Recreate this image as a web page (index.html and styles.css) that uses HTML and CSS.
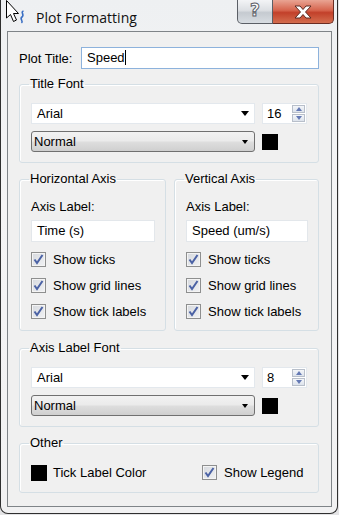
FILE: index.html
```html
<!DOCTYPE html>
<html>
<head>
	<title>Plot Formatting</title>
	<link rel="stylesheet" href="styles.css">
</head>
<body>
<div class="window">
	<div class="titlebar">
		<svg class="appicon" width="24" height="26" viewBox="0 0 24 26">
			<path d="M19.5 11 C16 12 21 15 18 17 C15 19 20 21 17.5 23" fill="none" stroke="#3a6fc4" stroke-width="1.6"/>
			<path d="M2.5 0.5 L2.5 18 L6.5 14.5 L9.5 21.5 L12.5 20 L9.5 13.5 L14.5 13.5 Z" fill="#fff" stroke="#000" stroke-width="1" stroke-linejoin="round"/>
		</svg>
		<span class="wtitle">Plot Formatting</span>
		<div class="caption">
			<div class="btn help">?</div>
			<div class="btn close">
				<svg width="22" height="14" viewBox="0 0 22 14">
					<path d="M3 1 L8 1 L11 4.5 L14 1 L19 1 L13.5 7 L19 13 L14 13 L11 9.5 L8 13 L3 13 L8.5 7 Z" fill="#fff" stroke="#5a2a22" stroke-width="1" stroke-linejoin="round"/>
				</svg>
			</div>
		</div>
	</div>

	<div class="client">
		<div class="title-row">
			<span class="lbl">Plot Title:</span>
			<div class="textbox focus">Speed<span class="caret"></span></div>
		</div>

		<fieldset class="group">
			<legend>Title Font</legend>
			<div class="font-row">
				<div class="combo flat">Arial<i class="arrow"></i></div>
				<div class="spin">16<span class="spin-btns"><b class="up"></b><b class="down"></b></span></div>
			</div>
			<div class="font-row">
				<div class="combo raised">Normal<i class="arrow small"></i></div>
				<span class="swatch"></span>
			</div>
		</fieldset>

		<div class="axes">
			<fieldset class="group axis">
				<legend>Horizontal Axis</legend>
				<div class="lbl">Axis Label:</div>
				<div class="textbox">Time (s)</div>
				<div class="checks">
					<div class="check"><span class="box"><svg width="11" height="11" viewBox="0 0 11 11"><path d="M1.5 5.5 L4 9 L9.5 1" fill="none" stroke="#4b62a5" stroke-width="2"/></svg></span>Show ticks</div>
					<div class="check"><span class="box"><svg width="11" height="11" viewBox="0 0 11 11"><path d="M1.5 5.5 L4 9 L9.5 1" fill="none" stroke="#4b62a5" stroke-width="2"/></svg></span>Show grid lines</div>
					<div class="check"><span class="box"><svg width="11" height="11" viewBox="0 0 11 11"><path d="M1.5 5.5 L4 9 L9.5 1" fill="none" stroke="#4b62a5" stroke-width="2"/></svg></span>Show tick labels</div>
				</div>
			</fieldset>
			<fieldset class="group axis">
				<legend>Vertical Axis</legend>
				<div class="lbl">Axis Label:</div>
				<div class="textbox">Speed (um/s)</div>
				<div class="checks">
					<div class="check"><span class="box"><svg width="11" height="11" viewBox="0 0 11 11"><path d="M1.5 5.5 L4 9 L9.5 1" fill="none" stroke="#4b62a5" stroke-width="2"/></svg></span>Show ticks</div>
					<div class="check"><span class="box"><svg width="11" height="11" viewBox="0 0 11 11"><path d="M1.5 5.5 L4 9 L9.5 1" fill="none" stroke="#4b62a5" stroke-width="2"/></svg></span>Show grid lines</div>
					<div class="check"><span class="box"><svg width="11" height="11" viewBox="0 0 11 11"><path d="M1.5 5.5 L4 9 L9.5 1" fill="none" stroke="#4b62a5" stroke-width="2"/></svg></span>Show tick labels</div>
				</div>
			</fieldset>
		</div>

		<fieldset class="group label-font">
			<legend>Axis Label Font</legend>
			<div class="font-row">
				<div class="combo flat">Arial<i class="arrow"></i></div>
				<div class="spin">8<span class="spin-btns"><b class="up"></b><b class="down"></b></span></div>
			</div>
			<div class="font-row">
				<div class="combo raised">Normal<i class="arrow small"></i></div>
				<span class="swatch"></span>
			</div>
		</fieldset>

		<fieldset class="group other">
			<legend>Other</legend>
			<div class="other-row">
				<div class="color-pick"><span class="swatch"></span>Tick Label Color</div>
				<div class="check legend-check"><span class="box"><svg width="11" height="11" viewBox="0 0 11 11"><path d="M1.5 5.5 L4 9 L9.5 1" fill="none" stroke="#4b62a5" stroke-width="2"/></svg></span>Show Legend</div>
			</div>
		</fieldset>
	</div>
</div>
</body>
</html>
```

FILE: styles.css
```css
* {
	padding: 0px;
	margin: 0px;
	box-sizing: border-box;
}
body {
	width: 339px;
	height: 515px;
	overflow: hidden;
	background: #e4e4e6;
	font-family: "Liberation Sans", Arial, sans-serif;
	font-size: 13px;
	color: #000;
}

/* window frame */
.window {
	width: 338px;
	height: 514px;
	border: 1px solid #2f2f2f;
	border-top: none;
	border-radius: 0 0 8px 8px;
	background: linear-gradient(to bottom, #eef0f2, #f4f4f5 40%, #f1f1f2);
	padding: 0 5px 7px 6px;
}
.titlebar {
	height: 31px;
	display: flex;
	align-items: flex-start;
}
.appicon {
	margin: 0 0 0 -3px;
}
.wtitle {
	font-family: "Open Sans", "Noto Sans", sans-serif;
	font-size: 14px;
	margin: 8px 0 0 8px;
	color: #111;
}
.caption {
	margin-left: auto;
	display: flex;
	margin-right: -2px;
}
.caption .btn {
	height: 24px;
	border: 1px solid #5b5f66;
	border-top: none;
	display: flex;
	align-items: center;
	justify-content: center;
}
.caption .help {
	width: 36px;
	border-radius: 0 0 0 5px;
	background: linear-gradient(to bottom, #f3f4f6, #dcdfe3 45%, #c5cad0 55%, #d8dde2);
	font-family: "DejaVu Sans", sans-serif;
	font-size: 17px;
	font-weight: bold;
	color: #fff;
	-webkit-text-stroke: 1px #5d6169;
	line-height: 1;
	padding-bottom: 2px;
}
.caption .close {
	width: 61px;
	border-left: none;
	border-color: #6a2d24;
	border-radius: 0 0 5px 0;
	background: linear-gradient(to bottom, #e9a493, #d6644d 45%, #c2402a 55%, #d46e4f);
}

/* client area */
.client {
	height: 476px;
	border: 1px solid #7f8488;
	background: #f0f0f0;
	padding: 15px 12px 0 11px;
}
.title-row {
	display: flex;
	align-items: center;
	height: 22px;
}
.title-row .lbl {
	width: 62px;
}
.textbox {
	height: 22px;
	background: #fff;
	border: 1px solid #e3e7eb;
	padding: 0 5px;
	line-height: 20px;
	white-space: nowrap;
}
.title-row .textbox {
	flex: 1;
	border-color: #8db2dc;
}
.caret {
	display: inline-block;
	width: 1px;
	height: 15px;
	background: #000;
	vertical-align: -3px;
}

/* group boxes */
.group {
	border: 1px solid #d5dfe5;
	border-radius: 3px;
	padding: 11px 11px 10px 11px;
	margin-top: 7px;
	box-shadow: inset 1px 1px 0 #fff;
}
.group legend {
	margin-left: -2px;
	padding: 0 1px;
	line-height: 16px;
}
.group.label-font {
	margin-top: 9px;
}
.font-row {
	display: grid;
	grid-template-columns: 1fr 45px;
	align-items: center;
	gap: 7px;
	height: 21px;
}
.font-row + .font-row {
	margin-top: 7px;
}
.combo {
	height: 21px;
	display: flex;
	align-items: center;
}
.combo.flat {
	background: #fff;
	border: 1px solid #e3e8ed;
	padding-left: 5px;
}
.combo.raised {
	border: 1px solid #707070;
	border-radius: 3px;
	background: linear-gradient(to bottom, #f2f2f2, #ebebeb 45%, #dddddd 55%, #cfcfcf);
	padding-left: 2px;
}
.arrow {
	margin-left: auto;
	margin-right: 5px;
	width: 0;
	height: 0;
	border-left: 4.5px solid transparent;
	border-right: 4.5px solid transparent;
	border-top: 5px solid #000;
}
.arrow.small {
	margin-right: 6px;
	border-left-width: 3.5px;
	border-right-width: 3.5px;
	border-top-width: 4px;
}
.spin {
	height: 21px;
	background: #fff;
	border: 1px solid #e3e8ed;
	display: flex;
	align-items: center;
	padding-left: 4px;
}
.spin-btns {
	margin-left: auto;
	margin-right: 1px;
	display: flex;
	flex-direction: column;
	gap: 1px;
}
.spin-btns b {
	width: 13px;
	height: 8px;
	border: 1px solid #b8bfca;
	background: linear-gradient(to bottom, #f4f6f9, #dde3ec);
	display: flex;
	align-items: center;
	justify-content: center;
}
.spin-btns b::after {
	content: "";
	border-left: 3.5px solid transparent;
	border-right: 3.5px solid transparent;
}
.spin-btns .up::after {
	border-bottom: 4px solid #6479b4;
}
.spin-btns .down::after {
	border-top: 4px solid #6479b4;
}
.swatch {
	width: 16px;
	height: 16px;
	background: #000;
	display: inline-block;
}

/* axis groups */
.axes {
	display: grid;
	grid-template-columns: 147px 145px;
	gap: 8px;
}
.axis {
	padding: 12px 10px 6px 11px;
	margin-top: 8px;
}
.axis .lbl {
	line-height: 16px;
}
.axis .textbox {
	margin-top: 5px;
}
.checks {
	margin-top: 4px;
}
.check {
	display: flex;
	align-items: center;
	height: 26px;
}
.box {
	width: 15px;
	height: 15px;
	border: 1px solid #8e8f8f;
	background: linear-gradient(135deg, #d6d9de, #f1f2f4);
	box-shadow: inset 0 0 0 1px #f4f4f4;
	display: flex;
	align-items: center;
	justify-content: center;
	margin-right: 7px;
}

/* other */
.other {
	padding: 13px 11px 11px 11px;
	margin-top: 8px;
}
.other-row {
	display: flex;
	align-items: center;
	height: 17px;
}
.color-pick {
	display: flex;
	align-items: center;
	gap: 6px;
	width: 171px;
}
.legend-check {
	height: 17px;
}
```
